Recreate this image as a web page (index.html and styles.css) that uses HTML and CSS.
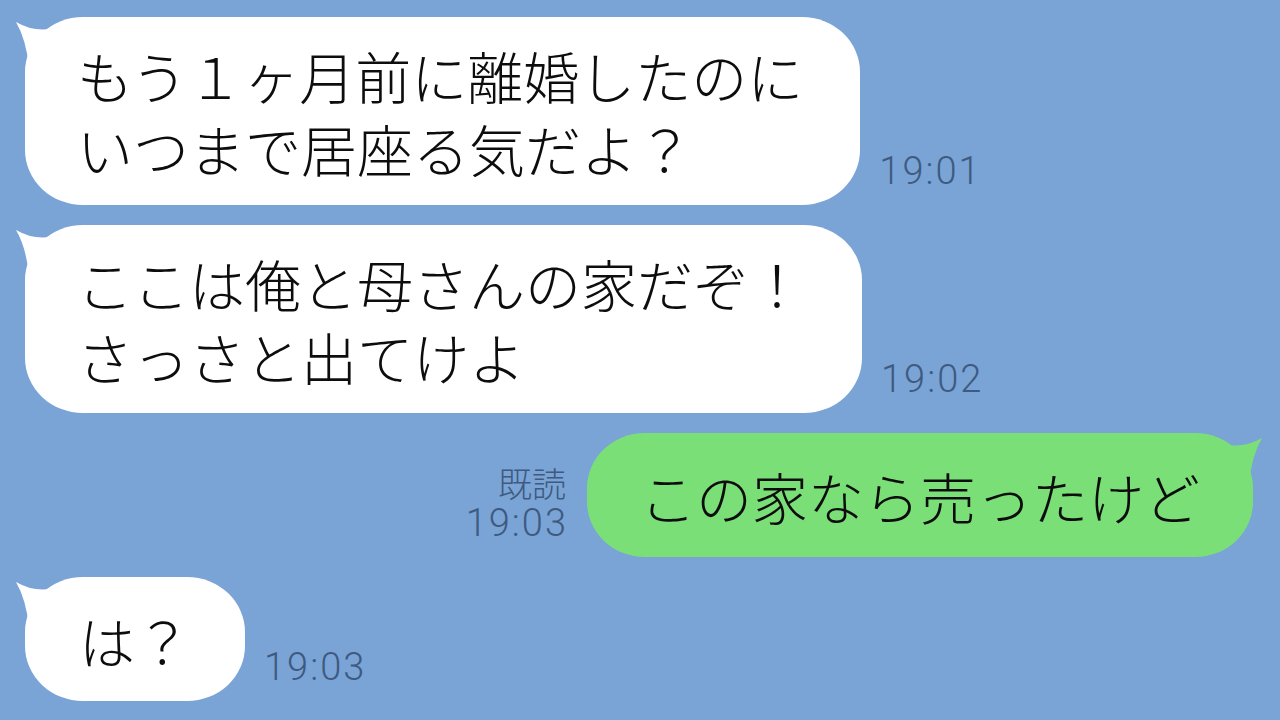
FILE: index.html
```html
<!DOCTYPE html>
<html lang="ja">
<head>
<meta charset="utf-8">
<title>chat</title>
<link rel="stylesheet" href="styles.css">
</head>
<body>
<main class="chat">
  <div class="row row-in">
    <div class="bubble bubble-in">もう１ヶ月前に離婚したのに<br>いつまで居座る気だよ？</div>
    <div class="meta"><span class="time">19:01</span></div>
  </div>
  <div class="row row-in">
    <div class="bubble bubble-in">ここは俺と母さんの家だぞ！<br>さっさと出てけよ</div>
    <div class="meta"><span class="time">19:02</span></div>
  </div>
  <div class="row row-out">
    <div class="meta meta-out"><span class="read">既読</span><span class="time">19:03</span></div>
    <div class="bubble bubble-out">この家なら売ったけど</div>
  </div>
  <div class="row row-in">
    <div class="bubble bubble-in bubble-short">は？</div>
    <div class="meta"><span class="time">19:03</span></div>
  </div>
</main>
</body>
</html>
```

FILE: styles.css
```css
html, body {
  margin: 0;
  padding: 0;
  background: #7aa4d5;
}

body {
  width: 1280px;
  height: 720px;
  overflow: hidden;
}

.chat {
  display: flex;
  flex-direction: column;
  gap: 20px;
  padding: 17px 27px 0 25px;
}

.row {
  display: flex;
  align-items: flex-end;
  gap: 19px;
}

.row-out {
  justify-content: flex-end;
  gap: 21px;
}

.bubble {
  position: relative;
  box-sizing: border-box;
  min-height: 124px;
  display: flex;
  align-items: center;
  padding: 21px 57px 21px 52px;
  border-radius: 58px / 55px;
  font-family: "Noto Sans CJK JP", sans-serif;
  font-weight: 300;
  font-size: 56px;
  line-height: 73px;
  color: #0d0d0d;
  white-space: nowrap;
}

.bubble-in {
  background: #ffffff;
}

.bubble-short {
  padding: 21px 54px;
}

.bubble-out {
  background: #7bdf78;
  padding: 21px 53px;
}

.bubble::before {
  content: "";
  position: absolute;
  top: 0;
  width: 50px;
  height: 50px;
  background: inherit;
}

.bubble-in::before {
  left: -10px;
  clip-path: path("M1 5 Q 20 16 40 11 L 50 4 L 50 50 L 14 50 Q 11 22 1 5 Z");
}

.bubble-out::before {
  right: -10px;
  clip-path: path("M49 5 Q 30 16 10 11 L 0 4 L 0 50 L 36 50 Q 39 22 49 5 Z");
}

.meta {
  display: flex;
  flex-direction: column;
  align-items: flex-end;
  padding-bottom: 12px;
  font-family: Roboto, "Liberation Sans", sans-serif;
  font-weight: 300;
  color: #3e5a80;
}

.time {
  font-size: 38px;
  line-height: 44px;
  letter-spacing: 2px;
  margin-right: -2px;
}

.read {
  font-family: "Noto Sans CJK JP", sans-serif;
  font-weight: 300;
  font-size: 34px;
  line-height: 36px;
}
```
